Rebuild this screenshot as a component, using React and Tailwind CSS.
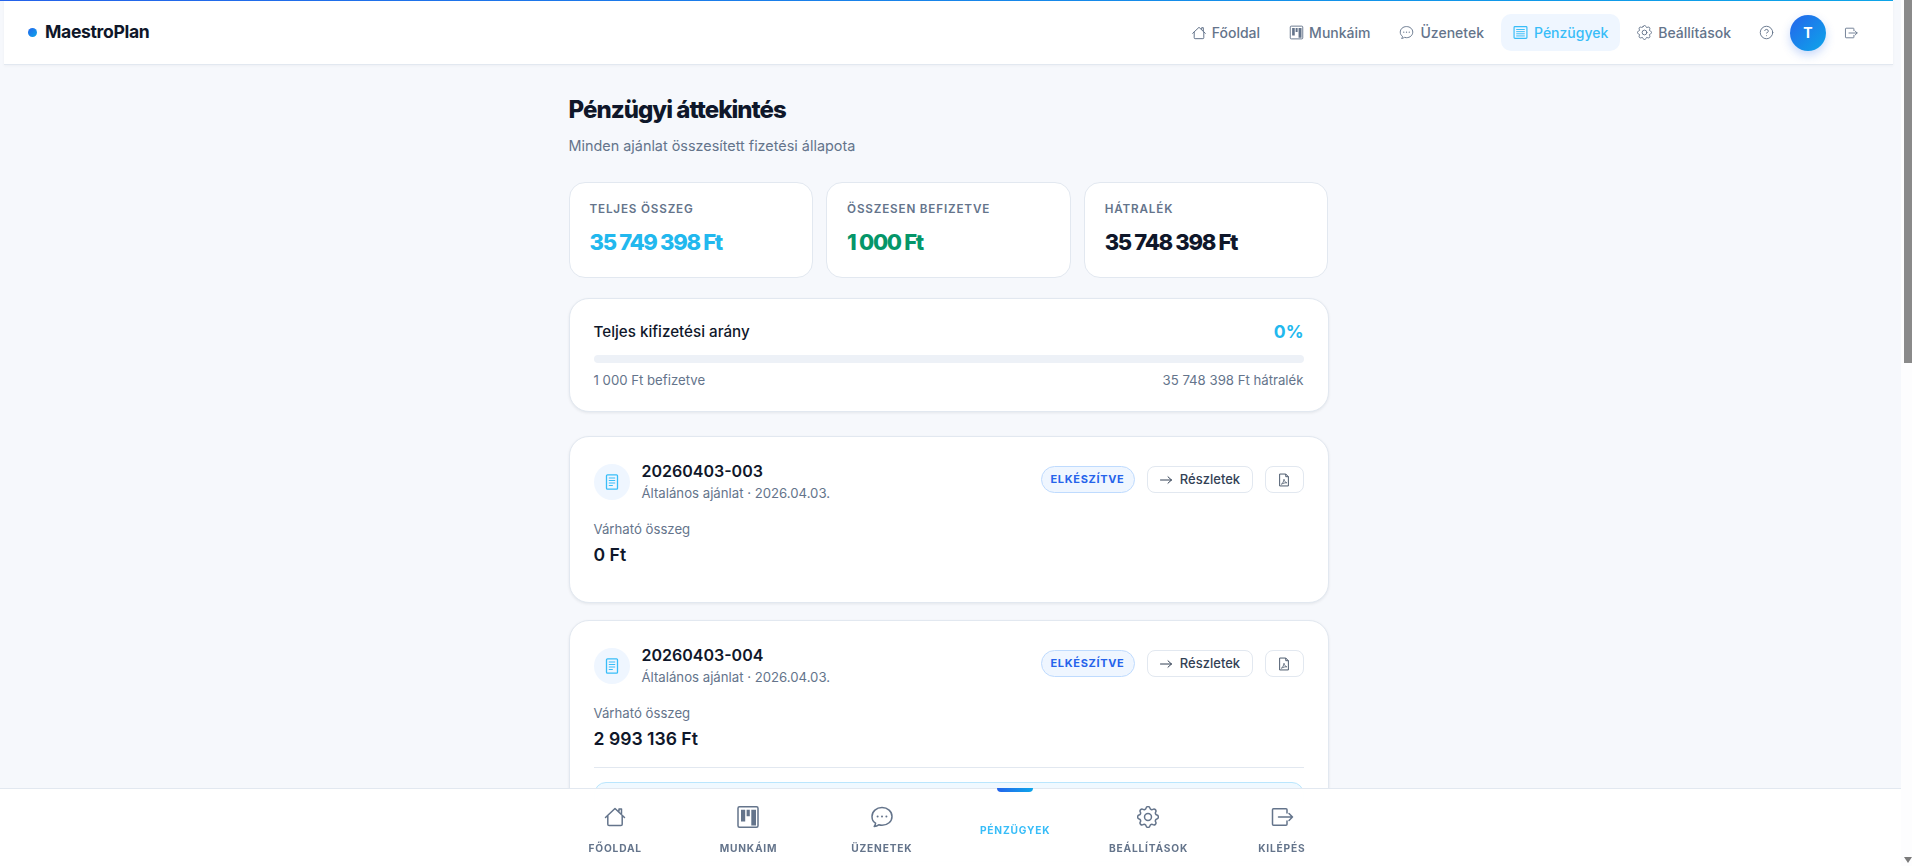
import { HiOutlineCog } from "react-icons/hi";
import { CircleHelp } from "lucide-react";

function HomeIcon({ size = 24 }) {
  return (
    <svg width={size} height={size} viewBox="0 0 24 24" fill="none" stroke="currentColor" strokeWidth="1.5" strokeLinejoin="round" strokeLinecap="round">
      <path d="M2.5 12.5 12 3.5l9.5 9M4.8 10.8v8.4a1.3 1.3 0 0 0 1.3 1.3h11.8a1.3 1.3 0 0 0 1.3-1.3v-8.4M16 6.300V4h2.500v4.600" />
    </svg>
  );
}

function BoardIcon({ size = 24 }) {
  return (
    <svg width={size} height={size} viewBox="0 0 24 24" fill="none">
      <rect x="2" y="1.800" width="20" height="20.400" rx="1.500" stroke="currentColor" strokeWidth="1.500" />
      <path fill="currentColor" d="M5 4.800h4.200v11.800H5zM10.600 4.800h3.200v6.400h-3.200zM15.300 4.800h4.700v15.600h-4.700z" />
    </svg>
  );
}

function ChatIcon({ size = 24 }) {
  return (
    <svg width={size} height={size} viewBox="0 0 24 24" fill="none" stroke="currentColor" strokeWidth="1.500" strokeLinejoin="round">
      <path d="M12 2.500c5.600 0 10 3.900 10 8.900s-4.400 8.900-10 8.900c-1.200 0-2.300-.2-3.300-.5-1.200.9-2.800 1.500-4.500 1.700.8-1 1.300-2.200 1.400-3.400C3.500 17 2 14.400 2 11.400c0-5 4.400-8.900 10-8.900Z" />
      <circle cx="7.600" cy="11.400" r="1" fill="currentColor" stroke="none" />
      <circle cx="12" cy="11.400" r="1" fill="currentColor" stroke="none" />
      <circle cx="16.400" cy="11.400" r="1" fill="currentColor" stroke="none" />
    </svg>
  );
}

function LogoutIcon({ size = 24 }) {
  return (
    <svg width={size} height={size} viewBox="0 0 24 24" fill="none" stroke="currentColor" strokeWidth="1.500" strokeLinejoin="round" strokeLinecap="round">
      <path d="M17 8V4.800a1 1 0 0 0-1-1H3.500a1 1 0 0 0-1 1v14.400a1 1 0 0 0 1 1H16a1 1 0 0 0 1-1V16M8.500 12H22.500M19 8.500l3.500 3.500-3.500 3.500" />
    </svg>
  );
}

// the cog only fills the middle of its 24 box, so crop to the drawing
function GearIcon({ size = 24, stroke = 1.3 }) {
  return <HiOutlineCog size={size} viewBox="2.5 2.5 19 19" style={{ strokeWidth: stroke }} />;
}

function DocIcon({ size = 16 }) {
  return (
    <svg width={size} height={size} viewBox="0 0 16 16" fill="none" stroke="currentColor">
      <rect x="2.500" y="0.800" width="11" height="14.400" rx="1" strokeWidth="1.300" />
      <path d="M4.800 4h6.400M4.800 6.500h6.400M4.800 9h6.400M4.800 11.500h4" strokeWidth="1" />
    </svg>
  );
}

function ListIcon({ size = 14 }) {
  return (
    <svg width={size} height={size} viewBox="0 0 14 14" fill="none" stroke="currentColor">
      <rect x="1" y="1.500" width="12" height="11" rx="0.800" strokeWidth="1.100" />
      <path d="M3 4.200h8M3 6.200h8M3 8.200h8M3 10.200h8" strokeWidth="0.900" />
    </svg>
  );
}

function PdfIcon() {
  return (
    <svg width="14" height="14" viewBox="0 0 16 16" fill="none" stroke="currentColor" strokeWidth="1.100" strokeLinejoin="round">
      <path d="M3 1.200h7l3 3v10.600H3zM10 1.200v3h3" />
      <path d="M5 12.800c1.500-1 2.600-3 3-5.600.5 2.300 1.500 3.500 3.200 4-1.800-.1-4 .4-6.200 1.600Z" strokeWidth="0.900" />
    </svg>
  );
}

function ArrowIcon() {
  return (
    <svg width="14" height="14" viewBox="0 0 14 14" fill="none" stroke="currentColor" strokeWidth="1" strokeLinecap="round" strokeLinejoin="round">
      <path d="M1.500 7h11M9 3.800 12.500 7 9 10.200" />
    </svg>
  );
}

const topLinks = [
  { label: "Főoldal", icon: <HomeIcon size={16} />, gap: "gap-[5px]" },
  { label: "Munkáim", icon: <BoardIcon size={15} />, gap: "gap-[5px]" },
  { label: "Üzenetek", icon: <ChatIcon size={15} />, gap: "gap-[6px]" },
  { label: "Pénzügyek", icon: <ListIcon size={15} />, gap: "gap-[6px]", active: true },
  { label: "Beállítások", icon: <GearIcon size={15} stroke={1.2} />, gap: "gap-[6px]" },
];

const bottomLinks = [
  { label: "Főoldal", icon: <HomeIcon /> },
  { label: "Munkáim", icon: <BoardIcon /> },
  { label: "Üzenetek", icon: <ChatIcon /> },
  { label: "Pénzügyek", active: true },
  { label: "Beállítások", icon: <GearIcon size={22} /> },
  { label: "Kilépés", icon: <LogoutIcon /> },
];

function StatCard({ label, value, color }) {
  return (
    <div className="h-[96px] rounded-2xl border border-[#e2e8f0] bg-white px-[20px] pt-[17px]">
      <div className="text-[11.7px] leading-[18px] font-semibold tracking-[0.07em] uppercase text-[#64748b]">{label}</div>
      <div className={`mt-[9px] text-[22px] leading-[30px] font-extrabold tracking-[-0.06em] ${color}`}>{value}</div>
    </div>
  );
}

function OfferCard({ number, total, children }) {
  return (
    <div className="rounded-[20px] border border-[#e2e8f0] bg-white px-6 pt-[24px] pb-[25px] shadow-[0_1px_3px_rgba(15,23,42,0.08)]">
      <div className="flex items-start justify-between">
        <div className="flex items-center gap-3">
          <div className="flex h-9 w-9 items-center justify-center rounded-full bg-[#eff6ff] text-[#38bdf8]">
            <DocIcon />
          </div>
          <div>
            <div className="text-[16px] leading-[20px] font-semibold text-[#0f172a]">{number}</div>
            <div className="mt-[3px] text-[13.2px] leading-[18px] text-[#64748b]">Általános ajánlat · 2026.04.03.</div>
          </div>
        </div>
        <div className="mt-[5px] flex items-center gap-3">
          <span className="flex h-[27px] w-[94px] items-center justify-center rounded-full border border-[#bfdbfe] bg-[#eff6ff] text-[11px] font-bold tracking-[0.06em] text-[#2563eb]">ELKÉSZÍTVE</span>
          <button className="flex h-[27px] w-[106px] items-center justify-center gap-[7px] rounded-lg border border-[#e2e8f0] bg-white text-[13px] font-medium text-[#334155]">
            <ArrowIcon />
            Részletek
          </button>
          <button className="flex h-[27px] w-[39px] items-center justify-center rounded-lg border border-[#e2e8f0] bg-white text-[#475569]">
            <PdfIcon />
          </button>
        </div>
      </div>
      <div className="mt-[18px] text-[13.2px] leading-[18px] text-[#64748b]">Várható összeg</div>
      <div className="mt-[5px] text-[17.6px] leading-[24px] font-semibold text-[#0f172a]">{total}</div>
      {children}
    </div>
  );
}

export default function App() {
  return (
    <div className="flex h-screen overflow-hidden bg-[#f6f8fc] font-['Inter',sans-serif]">
      <div className="relative min-w-0 flex-1">
        <div className="mr-2 h-px bg-gradient-to-r from-[#2563eb] to-[#0ea5e9]" />
        <div className="mr-2 ml-1">
          <header className="flex h-[64px] items-center justify-between border-b border-[#e2e8f0] bg-white pr-[35px] pl-6 shadow-[0_1px_3px_rgba(15,23,42,0.04)]">
            <div className="flex items-center gap-[8px]">
              <span className="h-[9px] w-[9px] rounded-full bg-gradient-to-br from-[#2563eb] to-[#0ea5e9]" />
              <span className="text-[17.6px] font-bold tracking-[-0.02em] text-[#0f172a]">MaestroPlan</span>
            </div>
            <nav className="flex items-center">
              <div className="flex items-center gap-[5px]">
                {topLinks.map((l) => (
                  <a
                    key={l.label}
                    className={`flex h-[37px] items-center ${l.gap} rounded-[10px] px-3 text-[14px] font-medium ${l.active ? "bg-[#eff6ff] text-[#38bdf8]" : "text-[#64748b]"}`}
                  >
                    {l.icon}
                    {l.label}
                  </a>
                ))}
              </div>
              <CircleHelp size={15} strokeWidth={1.5} className="ml-[16px] text-[#64748b]" />
              <div className="ml-[16px] flex h-9 w-9 items-center justify-center rounded-full bg-gradient-to-br from-[#2563eb] to-[#0ea5e9] text-[14px] font-bold text-white shadow-[0_4px_10px_rgba(37,99,235,0.25)]">T</div>
              <span className="ml-[18px] text-[#64748b]">
                <LogoutIcon size={14} />
              </span>
            </nav>
          </header>

          <main className="mx-auto w-[760px]">
            <h1 className="mt-[28px] text-[24px] leading-[34px] font-extrabold tracking-[-0.04em] text-[#0f172a]">Pénzügyi áttekintés</h1>
            <p className="mt-[9px] text-[14.4px] leading-[20px] text-[#64748b]">Minden ajánlat összesített fizetési állapota</p>

            <div className="mt-[26px] grid grid-cols-3 gap-[12.8px]">
              <StatCard label="Teljes összeg" value="35 749 398 Ft" color="text-[#22b8ee]" />
              <StatCard label="Összesen befizetve" value="1 000 Ft" color="text-[#059669]" />
              <StatCard label="Hátralék" value="35 748 398 Ft" color="text-[#0f172a]" />
            </div>

            <div className="mt-[20px] h-[114px] rounded-[20px] border border-[#e2e8f0] bg-white px-6 pt-[21px] shadow-[0_1px_3px_rgba(15,23,42,0.08)]">
              <div className="flex items-center justify-between">
                <span className="text-[15.2px] leading-[24px] font-medium text-[#0f172a]">Teljes kifizetési arány</span>
                <span className="text-[17.6px] leading-[24px] font-bold text-[#22b8ee]">0%</span>
              </div>
              <div className="mt-[11px] h-2 rounded-full bg-[#edf1f7]" />
              <div className="mt-[8px] flex justify-between text-[13.2px] leading-[18px] text-[#64748b]">
                <span>1 000 Ft befizetve</span>
                <span>35 748 398 Ft hátralék</span>
              </div>
            </div>

            <div className="mt-[24px] flex flex-col gap-[17px]">
              <OfferCard number="20260403-003" total="0 Ft">
                <div className="h-[10px]" />
              </OfferCard>
              <OfferCard number="20260403-004" total="2 993 136 Ft">
                <div className="mt-[16px] border-t border-[#e2e8f0] pt-[14px]">
                  <div className="h-[80px] rounded-xl border border-[#bae6fd] bg-[#f0f9ff]" />
                </div>
              </OfferCard>
            </div>
          </main>
        </div>

        <nav className="absolute inset-x-0 bottom-0 flex h-[78px] justify-center border-t border-[#e2e8f0] bg-white/95 pr-1 backdrop-blur-md">
          <div className="grid w-[800px] grid-cols-6">
            {bottomLinks.map((l) => (
              <a
                key={l.label}
                className={`relative flex flex-col items-center text-[10.2px] leading-[16px] font-bold tracking-[0.08em] uppercase ${l.active ? "pt-[33px] text-[#38bdf8]" : "pt-[16px] text-[#64748b]"}`}
              >
                {l.active && <span className="absolute top-[-1px] h-[4px] w-9 rounded-b bg-gradient-to-r from-[#2563eb] to-[#0ea5e9]" />}
                {l.icon && <span className="flex h-6 items-center justify-center">{l.icon}</span>}
                <span className={l.active ? "" : "mt-[11px]"}>{l.label}</span>
              </a>
            ))}
          </div>
        </nav>
      </div>

      <div className="flex w-[11px] flex-col items-end justify-between bg-[#fdfdfe] pb-[3px]">
        <div className="h-[363px] w-2 bg-[#8a8a8a]" />
        <div className="h-0 w-0 border-x-4 border-t-[6px] border-x-transparent border-t-[#7a7a7a]" />
      </div>
    </div>
  );
}
